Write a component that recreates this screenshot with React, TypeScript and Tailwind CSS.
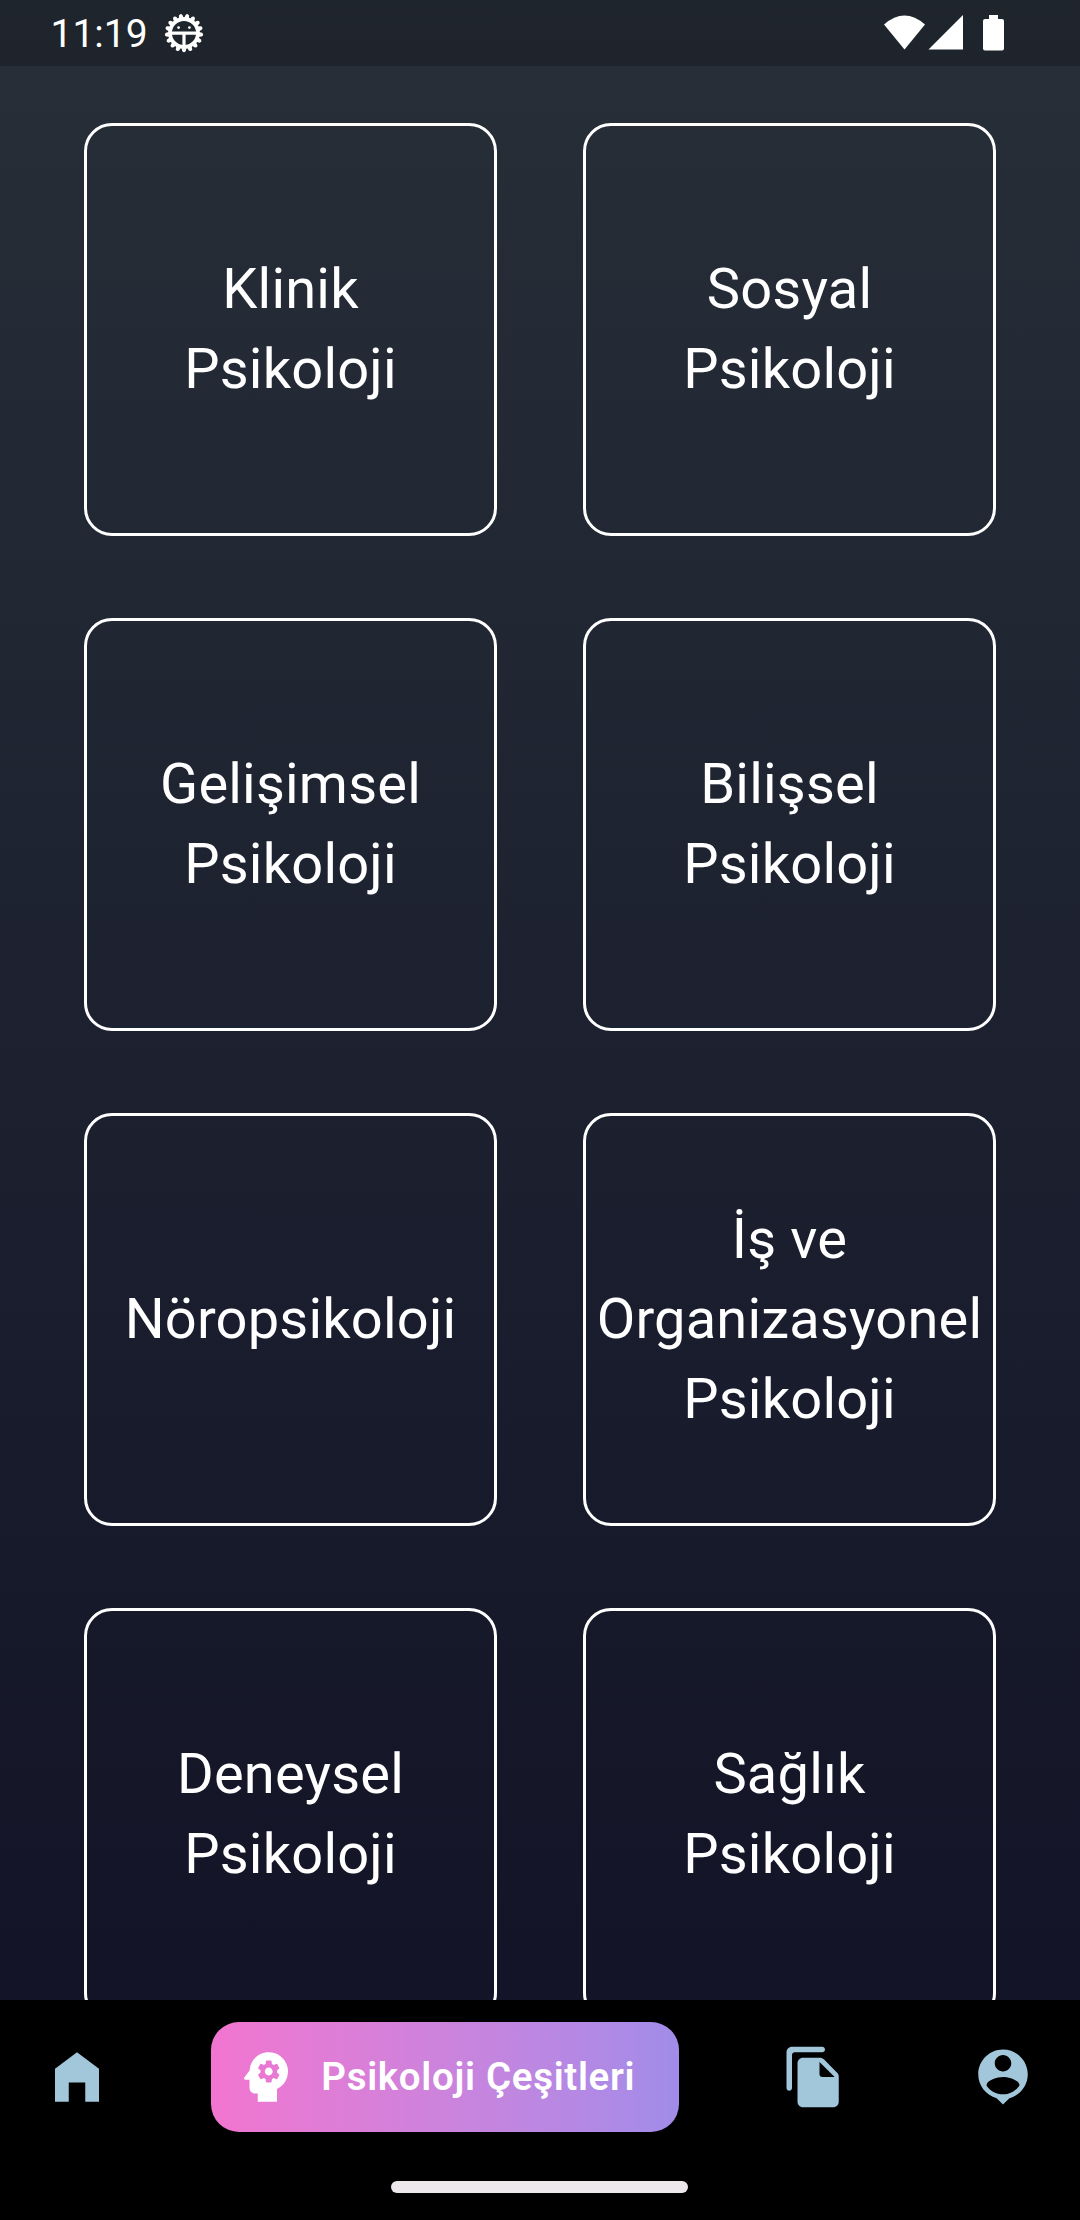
import type { ReactNode } from "react";

const topics = [
  ["Klinik", "Psikoloji"],
  ["Sosyal", "Psikoloji"],
  ["Gelişimsel", "Psikoloji"],
  ["Bilişsel", "Psikoloji"],
  ["Nöropsikoloji"],
  ["İş ve", "Organizasyonel", "Psikoloji"],
  ["Deneysel", "Psikoloji"],
  ["Sağlık", "Psikoloji"],
];

function DebugIcon() {
  const teeth = Array.from({ length: 17 }, (_, i) => (i * 360) / 17);
  return (
    <svg className="ml-[16px] size-[40px]" viewBox="-20 -20 40 40">
      <circle r="14" fill="none" stroke="#fff" strokeWidth="3.8" />
      {teeth.map((a) => (
        <path key={a} d="M-2.4 15L-1.8 18Q0 20.400 1.8 18L2.4 15Z" fill="#fff" transform={`rotate(${a})`} />
      ))}
      <path d="M-13-1.4H13V1.8H1.6V13H-1.6V1.8H-13Z" fill="#fff" />
      <circle cx="-5.4" cy="-5.4" r="1.4" fill="#fff" />
      <circle cx="5.4" cy="-5.4" r="1.4" fill="#fff" />
    </svg>
  );
}

function StatusBar() {
  return (
    <header className="flex h-[66px] shrink-0 items-center bg-black/20 pl-[50.5px] pr-[75px] text-white">
      <span className="mt-[2px] text-[39px] leading-[46px]">11:19</span>
      <DebugIcon />
      <svg className="ml-auto h-[36px] w-[122px]" viewBox="0 0 122 36" fill="#fff">
        <path d="M1 9.5Q21.500-8.500 42 9.500L21.500 34.500Z" />
        <path d="M80 0V34.500H45.500Z" />
        <path d="M106 0h9v4h4a2 2 0 0 1 2 2v27.500a2 2 0 0 1-2 2h-17a2 2 0 0 1-2-2V6a2 2 0 0 1 2-2h4z" />
      </svg>
    </header>
  );
}

function Icon({ d }: { d: string }) {
  return (
    <svg viewBox="0 0 24 24" className="size-[66px] shrink-0" fill="currentColor">
      <path fillRule="evenodd" d={d} />
    </svg>
  );
}

function NavButton({ children, label }: { children: ReactNode; label: string }) {
  return (
    <button aria-label={label} className="p-[22px] text-[#a2c6da]">
      {children}
    </button>
  );
}

export default function App() {
  return (
    <div className="flex h-[2220px] w-[1080px] flex-col overflow-hidden bg-black font-['Roboto',sans-serif]">
      <div className="flex h-[2000px] shrink-0 flex-col overflow-hidden bg-linear-to-b from-[#272f38] to-[#131427]">
        <StatusBar />
        <main className="grid grid-cols-[413px_413px] justify-center gap-x-[86px] gap-y-[82px] pt-[57px]">
          {topics.map((lines) => (
            <div
              key={lines[0]}
              className="flex h-[413px] flex-col items-center justify-center rounded-[28px] border-3 border-white pb-[2px] text-[56px] leading-[80px] tracking-[0.2px] text-white"
            >
              {lines.map((line) => (
                <span key={line}>{line}</span>
              ))}
            </div>
          ))}
        </main>
      </div>

      <nav className="flex h-[154px] shrink-0 items-center justify-between px-[22px]">
        <NavButton label="Ana sayfa">
          <Icon d="M4 21V9l8-6 8 6v12h-5v-7H9v7z" />
        </NavButton>
        <button className="flex h-[110px] w-[468px] items-center rounded-[28px] bg-linear-to-r from-[#f275d0] to-[#a18ce9] pl-[22px] text-white">
          <Icon d="M13 8.570c-.790 0-1.430.640-1.430 1.430s.640 1.430 1.430 1.430 1.430-.640 1.430-1.430-.640-1.430-1.430-1.430zM13 3C9.250 3 6.200 5.940 6.020 9.640L4.100 12.200a.500.500 0 0 0 .400.800H6v3c0 1.100.900 2 2 2h1v3h7v-4.680A6.999 6.999 0 0 0 13 3zm3 7c0 .130-.010.260-.020.390l.830.660c.080.060.100.160.050.250l-.800 1.390c-.050.090-.160.120-.240.090l-.990-.400c-.210.160-.430.290-.670.390L14 13.830c-.010.100-.100.170-.200.170h-1.600c-.100 0-.180-.070-.200-.170l-.150-1.060c-.250-.100-.470-.230-.680-.390l-.990.400c-.090.030-.200 0-.250-.090l-.800-1.390a.190.190 0 0 1 .050-.250l.840-.660c-.010-.130-.020-.260-.020-.390s.020-.270.040-.390l-.850-.660c-.080-.060-.100-.160-.050-.260l.800-1.380c.050-.090.150-.120.240-.090l1 .400c.200-.150.430-.290.670-.390L12 6.170c.020-.100.100-.170.200-.170h1.600c.100 0 .180.070.200.170l.150 1.060c.240.100.460.230.670.390l1-.400c.090-.030.200 0 .240.090l.800 1.380c.050.090.030.200-.050.260l-.850.660c.030.120.040.250.040.390z" />
          <span className="ml-[22px] whitespace-nowrap text-[38.5px] font-semibold tracking-[0.68px]">
            Psikoloji Çeşitleri
          </span>
        </button>
        <NavButton label="Dosyalar">
          <Icon d="M15 1H4c-1.100 0-2 .900-2 2v13c0 .550.450 1 1 1s1-.450 1-1V4c0-.550.450-1 1-1h10c.550 0 1-.450 1-1s-.450-1-1-1zm.590 4.590l4.830 4.830c.370.370.580.880.580 1.410V21c0 1.100-.900 2-2 2H7.990C6.890 23 6 22.100 6 21l.010-14c0-1.100.890-2 1.990-2h6.170c.530 0 1.040.210 1.420.590zM15 12h4.500L14 6.500V11c0 .550.450 1 1 1z" />
        </NavButton>
        <NavButton label="Profil">
          <Icon d="M12 2c-4.970 0-9 4.030-9 9 0 4.170 2.840 7.670 6.690 8.690L12 22l2.310-2.310C18.160 18.670 21 15.170 21 11c0-4.970-4.030-9-9-9zm0 2c1.660 0 3 1.340 3 3s-1.340 3-3 3-3-1.340-3-3 1.340-3 3-3zm0 14.300c-2.500 0-4.710-1.280-6-3.220.030-1.990 4-3.080 6-3.080 1.990 0 5.970 1.090 6 3.080-1.290 1.940-3.500 3.220-6 3.220z" />
        </NavButton>
      </nav>
      <div className="mt-[27px] ml-[391px] h-[12px] w-[297px] rounded-full bg-[#ece8ec]" />
    </div>
  );
}
